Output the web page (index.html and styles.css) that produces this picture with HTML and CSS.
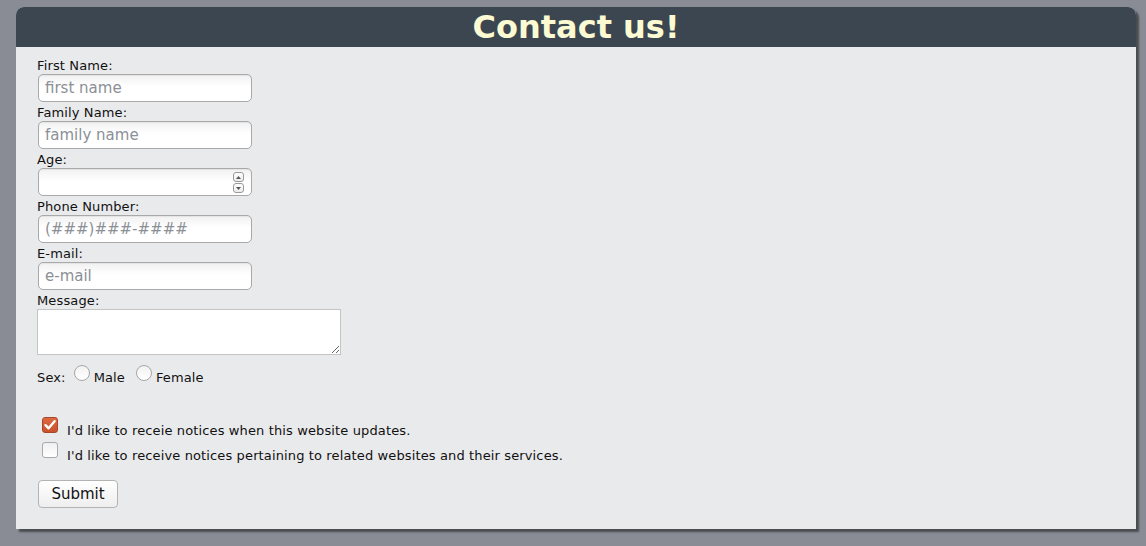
FILE: index.html
```html
<!DOCTYPE html>
<html>
<head>
<meta charset="utf-8">
<title>Contact us!</title>
<link rel="stylesheet" href="styles.css">
</head>
<body>
<div class="panel">
  <header class="panel-head"><h1 class="title">Contact us!</h1></header>
  <form class="form">
    <label class="lbl">First Name:</label>
    <input class="field" type="text" placeholder="first name">
    <label class="lbl">Family Name:</label>
    <input class="field" type="text" placeholder="family name">
    <label class="lbl">Age:</label>
    <div class="spin-wrap">
      <input class="field" type="text">
      <span class="spin">
        <span class="spin-btn"><svg width="5" height="3" viewBox="0 0 5 3"><path d="M0 3 L2.5 0 L5 3Z" fill="#555"/></svg></span>
        <span class="spin-btn"><svg width="5" height="3" viewBox="0 0 5 3"><path d="M0 0 L2.5 3 L5 0Z" fill="#555"/></svg></span>
      </span>
    </div>
    <label class="lbl">Phone Number:</label>
    <input class="field" type="text" placeholder="(###)###-####">
    <label class="lbl">E-mail:</label>
    <input class="field" type="text" placeholder="e-mail">
    <label class="lbl lbl-msg">Message:</label>
    <textarea class="msg"></textarea>
    <div class="sex-row">
      <span class="txt">Sex:</span>
      <input class="radio r1" type="radio" name="sex">
      <span class="txt">Male</span>
      <input class="radio r2" type="radio" name="sex">
      <span class="txt">Female</span>
    </div>
    <div class="cb-row first">
      <span class="cb-wrap">
        <input class="cb checked" type="checkbox" checked>
        <svg class="tick" width="16" height="16" viewBox="0 0 16 16"><path d="M3.5 8.2 L6.6 11.3 L12.6 4.2" fill="none" stroke="#fff" stroke-width="2.4" stroke-linecap="round" stroke-linejoin="round"/></svg>
      </span>
      <span class="txt">I'd like to receie notices when this website updates.</span>
    </div>
    <div class="cb-row">
      <span class="cb-wrap"><input class="cb" type="checkbox"></span>
      <span class="txt">I'd like to receive notices pertaining to related websites and their services.</span>
    </div>
    <button class="submit" type="button">Submit</button>
  </form>
</div>
</body>
</html>
```
FILE: styles.css
```css
html, body {
  margin: 0;
  padding: 0;
  background: #898c95;
  height: 100%;
}
body {
  padding: 7px 10px 0 16px;
  box-sizing: border-box;
  font-family: "DejaVu Sans", Verdana, sans-serif;
  color: #111;
}
.panel {
  width: 1120px;
  background: #e9eaec;
  border-radius: 8px 8px 0 0;
  box-shadow: 3px 3px 2px #4a4c50;
}
.panel-head {
  height: 40px;
  background: #3b4651;
  border-radius: 8px 8px 0 0;
  display: flex;
  justify-content: center;
  align-items: center;
}
.title {
  margin: 0;
  font-size: 32px;
  font-weight: bold;
  line-height: 40px;
  color: #fbfad2;
}
.form {
  display: flex;
  flex-direction: column;
  align-items: flex-start;
  padding: 11px 0 21px 21px;
}
.lbl {
  font-size: 13px;
  line-height: 15px;
  height: 15px;
  margin-bottom: 1px;
  letter-spacing: 0.13px;
}
.field {
  box-sizing: border-box;
  width: 214px;
  height: 28px;
  margin: 0 0 3px 1px;
  padding: 0 6px;
  border: 1px solid #a9a9a9;
  border-radius: 5px;
  background: linear-gradient(#f1f1f1, #ffffff 45%);
  box-shadow: inset 0 1px 1px rgba(0,0,0,0.06);
  font-family: "DejaVu Sans", Verdana, sans-serif;
  font-size: 15px;
  color: #222;
  outline: none;
}
.field::placeholder {
  color: #8b8f96;
}
.spin-wrap {
  position: relative;
}
.spin {
  position: absolute;
  right: 8px;
  top: 4px;
  display: flex;
  flex-direction: column;
  gap: 1px;
}
.spin-btn {
  box-sizing: border-box;
  width: 11px;
  height: 10px;
  border: 1px solid #9a9a9a;
  border-radius: 3px;
  background: linear-gradient(#ffffff, #ececec);
  display: flex;
  align-items: center;
  justify-content: center;
}
.msg {
  box-sizing: border-box;
  width: 304px;
  height: 46px;
  margin: 0;
  border: 1px solid #c4c4c4;
  background: #fff;
  font-family: "DejaVu Sans", Verdana, sans-serif;
}
.sex-row {
  display: flex;
  align-items: flex-start;
  margin-top: 10px;
  height: 20px;
}
.txt {
  font-size: 13px;
  line-height: 15px;
  padding-top: 5px;
  white-space: nowrap;
  letter-spacing: 0.13px;
}
.radio {
  appearance: none;
  -webkit-appearance: none;
  box-sizing: border-box;
  width: 16px;
  height: 16px;
  margin: 0 4px 0 0;
  border: 1px solid #a6a6a6;
  border-radius: 50%;
  background: linear-gradient(#f2f2f2, #ffffff);
}
.r1 {
  margin-left: 8px;
}
.r2 {
  margin-left: 11px;
}
.cb-row {
  display: flex;
  align-items: flex-start;
  height: 25px;
}
.cb-row .txt {
  padding-top: 6px;
}
.cb-row.first {
  margin-top: 32px;
}
.cb-wrap {
  position: relative;
  width: 16px;
  height: 16px;
  margin-left: 5px;
  margin-right: 9px;
}
.cb {
  appearance: none;
  -webkit-appearance: none;
  box-sizing: border-box;
  display: block;
  width: 16px;
  height: 16px;
  margin: 0;
  border: 1px solid #aaaaaa;
  border-radius: 3px;
  background: linear-gradient(#f0f0f0, #ffffff);
}
.cb.checked {
  border-color: #a9452a;
  background: linear-gradient(#dd6a40, #c9522c);
}
.tick {
  position: absolute;
  left: 0;
  top: 0;
}
.submit {
  box-sizing: border-box;
  width: 80px;
  height: 28px;
  margin: 13px 0 0 1px;
  border: 1px solid #b3b3b3;
  border-radius: 4px;
  background: linear-gradient(#ffffff, #eeeeee);
  font-family: "DejaVu Sans", Verdana, sans-serif;
  font-size: 15px;
  color: #111;
  padding: 0;
}
```
